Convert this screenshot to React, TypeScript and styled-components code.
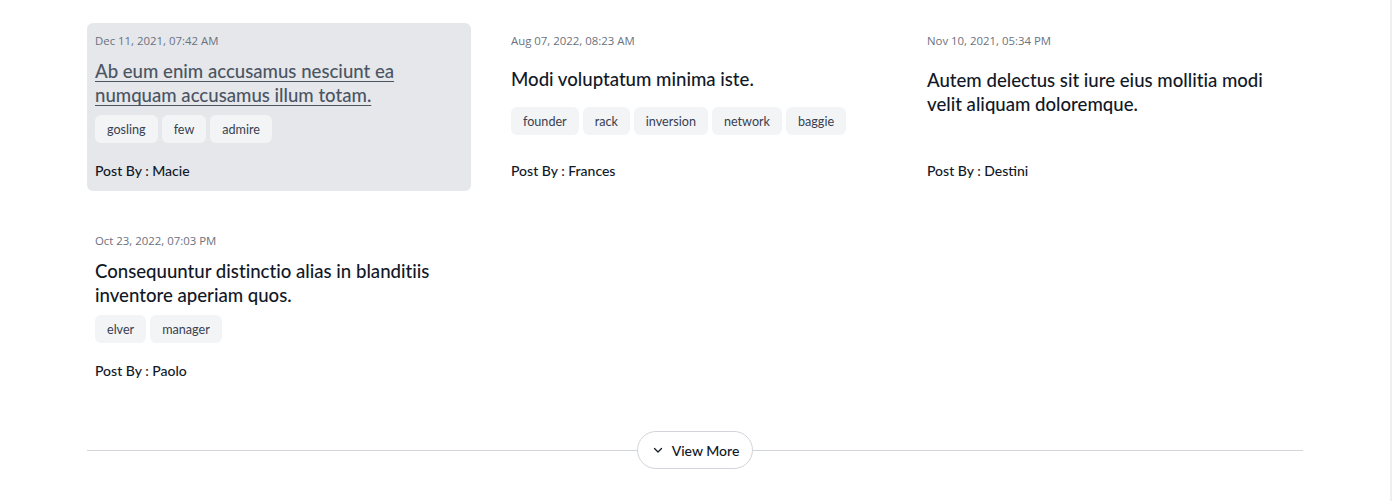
import React from "react";
import styled, { createGlobalStyle } from "styled-components";

const Global = createGlobalStyle`
  html, body { margin: 0; padding: 0; background: #fff; }
  body { font-family: Lato, "Noto Sans", sans-serif; }
  * { box-sizing: border-box; }
`;

const Page = styled.div`
  width: 1392px;
  min-height: 501px;
  border-right: 2px solid #efefef;
  padding: 23px 0 0 87px;
`;

const Container = styled.div`
  width: 1216px;
`;

const Grid = styled.div`
  display: grid;
  grid-template-columns: repeat(3, 384px);
  column-gap: 32px;
  row-gap: 32px;
`;

const Card = styled.article<{ $active?: boolean }>`
  display: flex;
  flex-direction: column;
  justify-content: space-between;
  padding: 10px 8px 10px;
  border-radius: 6px;
  background: ${(p) => (p.$active ? "#e5e7eb" : "transparent")};
`;

const DateText = styled.div`
  font-family: "Open Sans", "Noto Sans", sans-serif;
  font-size: 11.4px;
  line-height: 16px;
  color: #6b7280;
`;

const Title = styled.h3<{ $active?: boolean }>`
  margin: 10px 0 0;
  font-family: Lato, sans-serif;
  font-size: 18.6px;
  line-height: 24px;
  font-weight: 500;
  font-variant-ligatures: none;
  color: ${(p) => (p.$active ? "#4b5563" : "#111827")};
  text-decoration: ${(p) => (p.$active ? "underline" : "none")};
  text-underline-offset: 3px;
  text-decoration-thickness: 1px;
`;

const Tags = styled.div`
  display: flex;
  flex-wrap: wrap;
  gap: 4px;
  margin-top: 8px;
`;

const Tag = styled.span`
  display: inline-flex;
  align-items: center;
  height: 28px;
  padding: 0 12px;
  border-radius: 6px;
  background: #f3f4f6;
  font-family: Lato, sans-serif;
  font-size: 12.6px;
  font-variant-ligatures: none;
  color: #374151;
`;

const Author = styled.div`
  margin-top: 18px;
  font-family: Lato, sans-serif;
  font-size: 14px;
  line-height: 20px;
  font-weight: 500;
  color: #111827;
`;

const MoreRow = styled.div`
  display: flex;
  align-items: center;
  margin-top: 40px;
`;

const Rule = styled.div`
  flex: 1;
  height: 1px;
  background: #d1d5db;
`;

const MoreButton = styled.button`
  display: inline-flex;
  align-items: center;
  gap: 8px;
  height: 38px;
  padding: 0 13px 0 14px;
  border: 1px solid #d1d5db;
  border-radius: 999px;
  background: #fff;
  font-family: Lato, sans-serif;
  font-size: 14px;
  font-weight: 500;
  color: #111827;
  cursor: pointer;
`;

type Post = { date: string; title: string; tags: string[]; author: string; active?: boolean };

const posts: Post[] = [
  {
    date: "Dec 11, 2021, 07:42 AM",
    title: "Ab eum enim accusamus nesciunt ea numquam accusamus illum totam.",
    tags: ["gosling", "few", "admire"],
    author: "Macie",
    active: true,
  },
  {
    date: "Aug 07, 2022, 08:23 AM",
    title: "Modi voluptatum minima iste.",
    tags: ["founder", "rack", "inversion", "network", "baggie"],
    author: "Frances",
  },
  {
    date: "Nov 10, 2021, 05:34 PM",
    title: "Autem delectus sit iure eius mollitia modi velit aliquam doloremque.",
    tags: [],
    author: "Destini",
  },
  {
    date: "Oct 23, 2022, 07:03 PM",
    title: "Consequuntur distinctio alias in blanditiis inventore aperiam quos.",
    tags: ["elver", "manager"],
    author: "Paolo",
  },
];

const Chevron = () => (
  <svg width="12" height="12" viewBox="0 0 24 24" fill="none" stroke="#111827" strokeWidth="2.5" strokeLinecap="round" strokeLinejoin="round">
    <path d="M5 9l7 7 7-7" />
  </svg>
);

export default function App() {
  return (
    <>
      <Global />
      <Page>
        <Container>
          <Grid>
            {posts.map((p) => (
              <Card key={p.title} $active={p.active}>
                <DateText>{p.date}</DateText>
                <Title $active={p.active}>{p.title}</Title>
                <Tags>
                  {p.tags.map((t) => (
                    <Tag key={t}>{t}</Tag>
                  ))}
                </Tags>
                <Author>Post By : {p.author}</Author>
              </Card>
            ))}
          </Grid>
          <MoreRow>
            <Rule />
            <MoreButton>
              <Chevron />
              View More
            </MoreButton>
            <Rule />
          </MoreRow>
        </Container>
      </Page>
    </>
  );
}
